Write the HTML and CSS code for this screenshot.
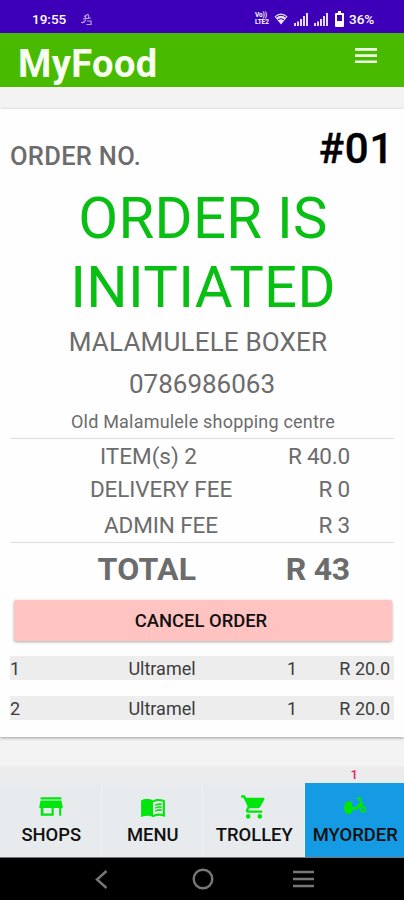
FILE: index.html
```html
<!DOCTYPE html>
<html lang="en">
<head>
<meta charset="utf-8">
<title>MyFood</title>
<link rel="stylesheet" href="styles.css">
</head>
<body>
<div class="status">
  <span class="clock">19:55</span>
  <svg class="note" width="13" height="13" viewBox="0 0 13 13" fill="none" stroke="#b9a2ea" stroke-width="1.2"><path d="M4 3.500 8.500 1M3 6l8-1M5.500 3v4.500L2 10M8.500 2v3M1 9.500h3.500M6.500 11.500h4.500V8H7"/></svg>
  <span class="volte"><span>Vo))</span><span>LTE2</span></span>
  <svg class="wifi" width="14" height="12" viewBox="0 0 14 12"><path d="M.5 3.500Q7-2.500 13.500 3.500L7 11.500z" fill="#e9e2fa"/><path d="M2 4.200q5-3.800 10 0M4 6.600q3-2 6 0" stroke="#3d00b8" stroke-width="1" fill="none"/></svg>
  <svg class="sig" width="14" height="13" viewBox="0 0 14 13" fill="#e3daf8"><path d="M0 10h2v3H0zM3 8.500h2V13H3zM6 6h2v7H6zM9 3h2v10H9zM12 0h2v13h-2z"/></svg>
  <svg class="sig sig2" width="14" height="13" viewBox="0 0 14 13" fill="#e3daf8"><path d="M0 10h2v3H0zM3 8.500h2V13H3zM6 6h2v7H6zM9 3h2v10H9zM12 0h2v13h-2z"/></svg>
  <svg class="batt" width="9" height="16" viewBox="0 0 9 16"><path d="M3 0h3v2h2q1 0 1 1v12q0 1-1 1H1q-1 0-1-1V3q0-1 1-1h2z" fill="#fff"/><path d="M2 4h5v6H2z" fill="#3d00b8"/></svg>
  <span class="pct">36%</span>
</div>
<header class="appbar">
  <h1>MyFood</h1>
  <svg width="22" height="16" viewBox="0 0 22 16" fill="#effbe8"><path d="M0 0h22v2.700H0zM0 6.200h22v2.700H0zM0 12.400h22v2.700H0z"/></svg>
</header>
<main class="card">
  <div class="order-head"><span class="label">ORDER NO.</span><span class="number">#01</span></div>
  <div class="state"><span>ORDER IS</span><br><span class="second">INITIATED</span></div>
  <div class="shop">MALAMULELE BOXER</div>
  <div class="phone">0786986063</div>
  <div class="address">Old Malamulele shopping centre</div>
  <div class="fees">
    <div class="fee items"><span>ITEM(s) 2</span><span class="amount">R 40.0</span></div>
    <div class="fee delivery"><span>DELIVERY FEE</span><span class="amount">R 0</span></div>
    <div class="fee admin"><span>ADMIN FEE</span><span class="amount">R 3</span></div>
  </div>
  <div class="fee total"><span>TOTAL</span><span class="amount">R 43</span></div>
  <button class="cancel">CANCEL ORDER</button>
  <div class="line"><span>1</span><span class="name">Ultramel</span><span class="qty">1</span><span class="price">R 20.0</span></div>
  <div class="line"><span>2</span><span class="name">Ultramel</span><span class="qty">1</span><span class="price">R 20.0</span></div>
</main>
<nav class="tabs">
  <div class="tab"><svg width="28" height="26" viewBox="0 0 24 24"><path d="M21.600 5H2.400V3h19.200zM21.600 6H2.400L1.300 11v2h1.200v7h12v-7h5v7h2v-7h1.200v-2zM12.500 18h-7.500v-5h7.500z"/></svg><span>SHOPS</span></div>
  <div class="tab"><svg width="28" height="26" viewBox="0 0 24 24"><path d="M21 5c-1.100-.35-2.300-.5-3.500-.5-1.950 0-4.050.4-5.500 1.500-1.450-1.100-3.550-1.500-5.500-1.500S2.450 4.900 1 6v15.100c.5.300 3-1.100 5.500-1.100 1.950 0 4.050.4 5.500 1.500 1.350-.85 3.800-1.500 5.500-1.500 1.650 0 3.350.3 4.750 1.050.4.200.75-.05.75-.55V6c-.6-.45-1.250-.75-2-1zm0 13.500c-1.100-.35-2.300-.5-3.500-.5-1.700 0-4.150.65-5.500 1.500V8c1.350-.85 3.800-1.500 5.500-1.500 1.200 0 2.400.15 3.500.5z"/><path d="M14 9.500q3-1.300 6-.8v1.500q-3-.5-6 .8zM14 12.200q3-1.300 6-.8v1.500q-3-.5-6 .8zM14 14.900q3-1.300 6-.8v1.500q-3-.5-6 .8z"/></svg><span>MENU</span></div>
  <div class="tab"><svg class="cart" width="28" height="28" viewBox="0 0 24 24"><path d="M7 18c-1.100 0-1.990.9-1.990 2S5.900 22 7 22s2-.9 2-2-.9-2-2-2zM1 2v2h2l3.600 7.590-1.350 2.450c-.16.280-.25.610-.25.960 0 1.100.9 2 2 2h12v-2H7.420c-.14 0-.25-.11-.25-.25l.03-.12.900-1.630h7.450c.75 0 1.410-.41 1.750-1.030l3.580-6.490c.08-.14.120-.31.120-.48 0-.55-.45-1-1-1H5.210l-.94-2H1zm16 16c-1.100 0-1.990.9-1.990 2s.89 2 1.990 2 2-.9 2-2-.9-2-2-2z"/></svg><span>TROLLEY</span></div>
  <div class="tab active"><svg width="24" height="18" viewBox="0 0 24 18"><path d="M1 11Q1 6 5 5.500h4V11h3.500L17 6.500 15.500 3H14V1h3.500L20 8v2h-1.500l-5 4H9.500a4 4 0 0 1-8 0H1z"/><circle cx="20" cy="13.200" r="3.300"/><circle cx="20" cy="13.200" r="1.200" fill="#159be3"/></svg><span>MYORDER</span><em>1</em></div>
</nav>
<footer class="system">
  <svg width="13" height="19" viewBox="0 0 13 19"><path d="M11.500 1 2 9.500l9.500 8.500"/></svg>
  <svg width="22" height="22" viewBox="0 0 22 22"><circle cx="11" cy="11" r="9.300"/></svg>
  <svg width="21" height="18" viewBox="0 0 21 18"><path d="M0 2h21M0 9h21M0 16h21"/></svg>
</footer>
</body>
</html>
```
FILE: styles.css
```css
* { box-sizing: border-box; }
body { margin: 0; width: 404px; height: 900px; overflow: hidden; background: #f3f3f3; font-family: Roboto, sans-serif; color: #6c6c6c; display: flex; flex-direction: column; }
svg { display: block; flex: none; }
.status { height: 33px; background: #3d00b8; color: #fff; display: flex; align-items: center; padding: 5px 0 0 32px; font-size: 13.5px; font-weight: 500; flex: none; }
.clock { width: 48px; }
.volte { display: flex; flex-direction: column; margin-left: 162px; width: 16px; font-size: 6.5px; line-height: 7px; font-weight: 700; letter-spacing: -.1px; }
.wifi { margin-left: 3px; }
.sig, .sig2 { margin-left: 6px; }
.batt { margin-left: 7px; }
.pct { margin-left: 5px; }
.appbar { height: 54px; background: #48bb00; display: flex; justify-content: space-between; padding: 15px 27px 0 18px; flex: none; }
h1 { margin: 0; font-size: 38px; line-height: 32px; font-weight: 700; letter-spacing: .4px; color: #f8fff2; }
.card { margin-top: 22px; height: 628px; background: #fefefe; box-shadow: 0 1px 3px rgba(0,0,0,.35); padding: 0 10px; flex: none; text-align: center; }
.order-head { height: 75px; display: flex; justify-content: space-between; padding-top: 20px; line-height: 40px; font-weight: 500; }
.label { font-size: 25.5px; padding-top: 7px; letter-spacing: .3px; }
.number { font-size: 42px; color: #000; letter-spacing: .7px; -webkit-text-stroke: .4px #000; }
.state { height: 138px; font-size: 58px; line-height: 68.5px; letter-spacing: .3px; color: #0abf14; padding-left: 2px; }
.shop { height: 41px; font-size: 26px; line-height: 41px; letter-spacing: .18px; padding-right: 8px; }
.phone { height: 43px; font-size: 26px; line-height: 43px; }
.address { height: 33px; font-size: 18px; line-height: 31px; letter-spacing: .2px; padding-left: 2px; border-bottom: 1px solid #dedede; }
.fees { height: 104px; border-bottom: 1px solid #dedede; }
.fee { display: grid; grid-template-columns: 302px 38px; font-size: 22.5px; }
.amount { justify-self: end; white-space: nowrap; letter-spacing: -.2px; }
.items { line-height: 34px; height: 33px; }
.items span:first-child { padding-right: 25px; }
.delivery { line-height: 34px; height: 35px; letter-spacing: -.1px; }
.admin { line-height: 36px; height: 35px; letter-spacing: -.1px; }
.total { height: 57px; font-size: 32px; line-height: 53px; font-weight: 700; letter-spacing: .3px; }
.total span:first-child { padding-right: 28px; }
.cancel { display: block; width: 378px; height: 41px; margin: 0 0 15px 3.5px; padding: 0 3px 0 0; border: 0; border-radius: 2px; background: #ffc4c1; box-shadow: 0 1px 3px rgba(0,0,0,.35); font: 500 18.4px/42px Roboto, sans-serif; color: #111; }
.line { height: 24px; margin: 0 0 16px; background: #ededed; display: grid; grid-template-columns: 79px 146px 94px 1fr; text-align: left; font-size: 18px; line-height: 25px; color: #3c3c3c; }
.name, .qty { text-align: center; }
.qty { padding-left: 20px; }
.price { white-space: nowrap; text-align: right; padding-right: 4px; }
.tabs { margin-top: 29px; height: 91px; background: linear-gradient(#eeecec, #e8ebed 22px); display: grid; grid-template-columns: repeat(3, 101.5px) 1fr; padding-top: 17px; flex: none; font-weight: 500; font-size: 18.4px; line-height: 22px; color: #111; }
.tab { display: flex; flex-direction: column; align-items: center; position: relative; padding-left: 2px; border-right: 1px solid #eef0f1; }
.tab svg { margin-top: 11px; height: 26px; fill: #00e60c; }
.tab span { margin-top: 4px; }
.tab .cart { margin-top: 10px; height: 28px; }
.tab .cart + span { margin-top: 3px; }
.tab.active { background: #159be3; border: 0; }
.tab.active svg { margin-top: 13px; height: 18px; }
.tab.active span { margin-top: 10px; }
.tab em { position: absolute; top: -17px; left: 46px; font: 500 13px/17px Roboto, sans-serif; color: #e82068; }
.system { height: 43px; background: #000; border-top: 1px solid #777; display: flex; align-items: center; padding-left: 95px; flex: none; }
.system svg { fill: none; stroke: #777; stroke-width: 2.4; }
.system svg + svg { margin-left: 84px; }
.system svg + svg + svg { margin-left: 79px; }
```
